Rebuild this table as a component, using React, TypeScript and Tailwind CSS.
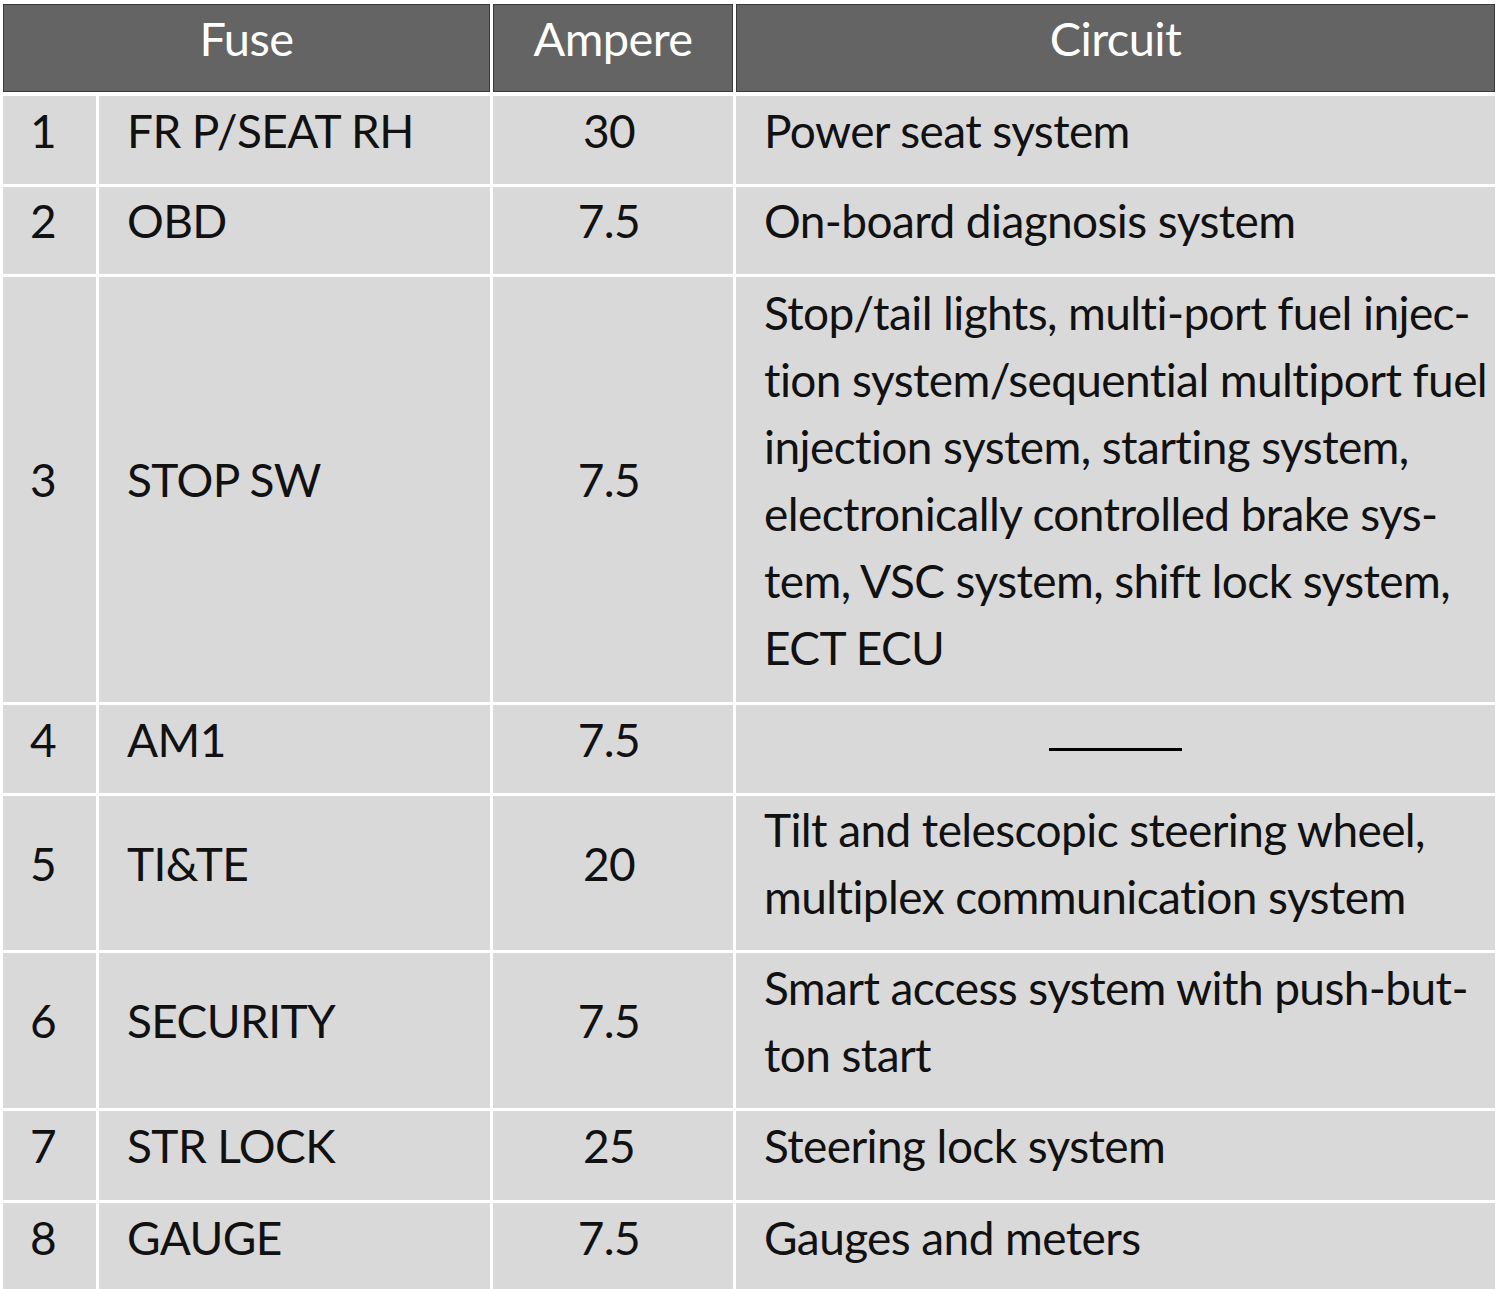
import React from "react";

/* Fuse table — numbered fuses with amperage and the circuits they protect */

type Row = {
  no: string;
  fuse: string;
  amp: string;
  circuit: string[] | null;
  h: string;
};

const rows: Row[] = [
  { no: "1", fuse: "FR P/SEAT RH", amp: "30", circuit: ["Power seat system"], h: "h-[88px]" },
  { no: "2", fuse: "OBD", amp: "7.5", circuit: ["On-board diagnosis system"], h: "h-[87px]" },
  {
    no: "3",
    fuse: "STOP SW",
    amp: "7.5",
    circuit: [
      "Stop/tail lights, multi-port fuel injec-",
      "tion system/sequential multiport fuel",
      "injection system, starting system,",
      "electronically controlled brake sys-",
      "tem, VSC system, shift lock system,",
      "ECT ECU",
    ],
    h: "h-[425px]",
  },
  { no: "4", fuse: "AM1", amp: "7.5", circuit: null, h: "h-[88px]" },
  {
    no: "5",
    fuse: "TI&TE",
    amp: "20",
    circuit: ["Tilt and telescopic steering wheel,", "multiplex communication system"],
    h: "h-[154px]",
  },
  {
    no: "6",
    fuse: "SECURITY",
    amp: "7.5",
    circuit: ["Smart access system with push-but-", "ton start"],
    h: "h-[155px]",
  },
  { no: "7", fuse: "STR LOCK", amp: "25", circuit: ["Steering lock system"], h: "h-[89px]" },
  { no: "8", fuse: "GAUGE", amp: "7.5", circuit: ["Gauges and meters"], h: "h-[88px]" },
];

const cell = "bg-[#d9d9d9] flex items-center pb-5";
const head =
  "h-[88px] bg-[#646464] border border-[#3a3a3a] flex items-center justify-center pb-5 text-white text-[47px]";

export default function App() {
  return (
    <div className="w-[1500px] h-[1289px] overflow-hidden bg-white pt-[4px] pl-[3px] font-['Lato',sans-serif] text-[#111] text-[46px] leading-[67px] tracking-[-0.6px] [font-variant-ligatures:none]">
      {/* header */}
      <div className="grid grid-cols-[487px_240px_759px] gap-x-[3px] w-[1492px]">
        <div className={head}>Fuse</div>
        <div className={head}>Ampere</div>
        <div className={head}>Circuit</div>
      </div>

      {/* body */}
      <div className="grid grid-cols-[93px_391px_240px_759px] gap-[3px] w-[1492px] mt-[4px]">
        {rows.map((r) => (
          <React.Fragment key={r.no}>
            <div className={`${cell} ${r.h} pl-[27px]`}>{r.no}</div>
            <div className={`${cell} ${r.h} pl-[28px]`}>{r.fuse}</div>
            <div className={`${cell} ${r.h} justify-center pr-2`}>{r.amp}</div>
            {r.circuit ? (
              <div className={`${cell} ${r.h} pl-[28px]`}>
                <div>
                  {r.circuit.map((line) => (
                    <div key={line} className="whitespace-nowrap">
                      {line}
                    </div>
                  ))}
                </div>
              </div>
            ) : (
              <div className={`bg-[#d9d9d9] ${r.h} flex items-center justify-center`}>
                <div className="w-[133px] h-[3px] bg-black" />
              </div>
            )}
          </React.Fragment>
        ))}
      </div>
    </div>
  );
}
